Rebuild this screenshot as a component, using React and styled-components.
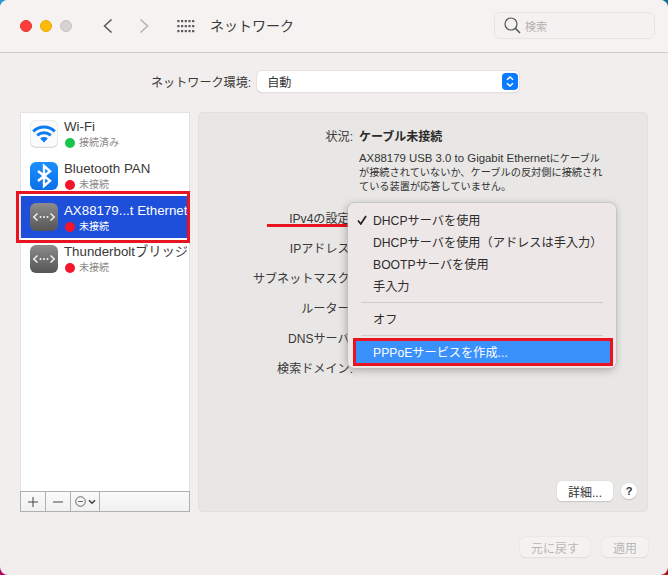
import React from "react";
import styled, { createGlobalStyle } from "styled-components";

const Global = createGlobalStyle`
  html, body { margin: 0; padding: 0; width: 668px; height: 575px; overflow: hidden; }
  body { font-family: "Liberation Sans", "Noto Sans CJK JP", sans-serif; }
  * { box-sizing: border-box; }
`;

const Desktop = styled.div`
  width: 668px;
  height: 575px;
  background:
    radial-gradient(circle at 0 0, #2b95d8 0 12px, transparent 12px),
    radial-gradient(circle at 100% 0, #0f6f94 0 12px, transparent 12px),
    radial-gradient(circle at 0 100%, #b3055f 0 12px, transparent 12px),
    radial-gradient(circle at 100% 100%, #b5121f 0 12px, transparent 12px),
    #f1eeed;
`;

const Window = styled.div`
  width: 668px;
  height: 575px;
  border-radius: 8px;
  background: #f1eeed;
  display: flex;
  flex-direction: column;
  overflow: hidden;
  color: #3a3838;
`;

const TitleBar = styled.header`
  height: 53px;
  flex: none;
  display: flex;
  align-items: center;
  padding: 0 13px 1px 20px;
  background: #f5f2f1;
  border-bottom: 1px solid #cfcbca;
`;

const Lights = styled.div`
  display: flex;
  gap: 8px;
  margin-right: 30px;
`;

const Light = styled.span`
  width: 12px;
  height: 12px;
  border-radius: 50%;
  background: ${(p) => p.$color};
  border: 1px solid ${(p) => p.$edge};
`;

const NavButton = styled.svg`
  width: 12px;
  height: 18px;
  margin-right: ${(p) => p.$gap}px;
  fill: none;
  stroke: ${(p) => p.$color};
  stroke-width: 1.5;
`;

const TitleText = styled.h1`
  margin: 0 0 0 15px;
  font-size: 14px;
  line-height: 18px;
  font-weight: 400;
  color: #3c3a3a;
`;

const SearchBox = styled.div`
  margin-left: auto;
  width: 161px;
  height: 27px;
  display: flex;
  align-items: center;
  gap: 4px;
  padding-left: 9px;
  border: 1px solid #e8e4e3;
  border-radius: 6px;
  background: #f4f1f0;
  font-size: 11px;
  line-height: 14px;
  color: #b3b0af;
`;

const SearchLabel = styled.span`
  padding-top: 2px;
`;

const Content = styled.main`
  flex: 1;
  display: flex;
  flex-direction: column;
  padding: 18px 20px 0;
`;

const EnvRow = styled.div`
  height: 21px;
  display: flex;
  align-items: center;
  justify-content: flex-start;
  padding-left: 131px;
  gap: 6px;
  font-size: 12.1px;
`;

const SelectBox = styled.div`
  position: relative;
  width: 262px;
  height: 21px;
  padding-left: 10px;
  display: flex;
  align-items: center;
  background: #fff;
  border-radius: 5px;
  box-shadow: 0 0 0 1px #e4e1e0, 0 1px 1px #b9b6b5;
  color: #333;
`;

const Stepper = styled.span`
  position: absolute;
  right: 1px;
  top: 2px;
  width: 16px;
  height: 17px;
  border-radius: 4px;
  background: #0a7bff;
  display: flex;
  align-items: center;
  justify-content: center;
`;

const Main = styled.div`
  margin-top: 20px;
  height: 400px;
  display: flex;
  gap: 8px;
`;

const Sidebar = styled.aside`
  width: 170px;
  display: flex;
  flex-direction: column;
  background: #fff;
  border: 1px solid #e4e1e0;
  border-bottom: none;
`;

const ServiceList = styled.ul`
  flex: 1;
  list-style: none;
  margin: 0;
  padding: 0 2px 0 0;
`;

const ServiceRow = styled.li`
  height: 41.7px;
  display: flex;
  align-items: center;
  gap: 6px;
  padding-left: 9px;
  background: ${(p) => (p.$selected ? "#1d4fdb" : "transparent")};
  color: ${(p) => (p.$selected ? "#fff" : "#3a3838")};
`;

const Tile = styled.svg`
  width: 28px;
  height: 28px;
  flex: none;
`;

const ServiceInfo = styled.div`
  min-width: 0;
  padding-top: 3px;
  display: flex;
  flex-direction: column;
  white-space: nowrap;
  overflow: hidden;
`;

const ServiceName = styled.span`
  font-size: 13.3px;
  line-height: 16px;
`;

const ServiceStatus = styled.span`
  display: flex;
  align-items: center;
  gap: 4px;
  font-size: 10px;
  line-height: 16px;
  margin-left: 1px;
  color: ${(p) => (p.$selected ? "#fff" : "#8b8988")};
`;

const Dot = styled.span`
  width: 10px;
  height: 10px;
  border-radius: 50%;
  background: ${(p) => p.$color};
`;

const ListBar = styled.div`
  height: 21px;
  margin: 0 -1px;
  display: flex;
  background: linear-gradient(#fafafa, #f1f0f0);
  border: 1px solid #b1b0b0;
`;

const BarButton = styled.button`
  width: ${(p) => p.$w}px;
  padding: 0;
  border: none;
  border-right: 1px solid #b1b0b0;
  background: transparent;
  display: flex;
  align-items: center;
  justify-content: center;
  gap: 2px;
`;

const Panel = styled.section`
  position: relative;
  width: 450px;
  display: flex;
  flex-direction: column;
  padding-top: 16px;
  background: #e8e7e5;
  border: 1px solid #e2e0de;
  border-radius: 5px;
`;

const StatusGrid = styled.div`
  display: grid;
  grid-template-columns: 154px 260px;
  column-gap: 6px;
  font-size: 12px;
  line-height: 16px;
`;

const RightLabel = styled.div`
  text-align: right;
  white-space: nowrap;
  font-size: 12.1px;
`;

const StatusValue = styled.div`
  font-weight: 700;
  color: #2b2a2a;
`;

const Description = styled.p`
  grid-column: 2;
  margin: 6px 0 0;
  font-size: 10.2px;
  line-height: 14px;
  color: #333;
`;

const DescriptionLatin = styled.span`
  font-size: 11.4px;
`;

const Form = styled.div`
  margin-top: 10px;
  display: flex;
  flex-direction: column;
`;

const FormRow = styled(RightLabel)`
  width: 154px;
  height: 30px;
  line-height: 30px;
`;

const PanelActions = styled.div`
  margin-top: auto;
  padding: 0 10px 10px 0;
  display: flex;
  justify-content: flex-end;
  align-items: center;
  gap: 8px;
`;

const PushButton = styled.button`
  height: 20px;
  width: ${(p) => p.$w}px;
  padding: 0;
  border: none;
  border-radius: 5px;
  background: #fff;
  box-shadow: 0 0 0 0.5px #dedcdb, 0 1px 1px #b5b3b2;
  font: 12px "Liberation Sans", "Noto Sans CJK JP", sans-serif;
  color: #333;
`;

const HelpButton = styled.button`
  width: 16px;
  height: 16px;
  padding: 0;
  border: none;
  border-radius: 50%;
  background: #fff;
  box-shadow: 0 0 0 0.5px #dedcdb, 0 1px 1px #b5b3b2;
  font: 700 11px "Liberation Sans", sans-serif;
  color: #333;
`;

const Footer = styled.footer`
  margin-top: 25px;
  display: flex;
  justify-content: flex-end;
  gap: 12px;
`;

const DisabledButton = styled.button`
  height: 20px;
  width: ${(p) => p.$w}px;
  padding: 0;
  border: none;
  border-radius: 5px;
  background: #f4f2f1;
  box-shadow: 0 0 0 0.5px #e6e3e2, 0 1px 1px #dcd9d8;
  font: 12px "Liberation Sans", "Noto Sans CJK JP", sans-serif;
  color: #b9b6b5;
`;

const Underline = styled.div`
  position: absolute;
  left: 68px;
  top: 111px;
  width: 84px;
  height: 2.5px;
  background: #e8141f;
`;

const PopupMenu = styled.div`
  position: absolute;
  left: 149px;
  top: 90px;
  width: 268px;
  padding: 6px 5px 5px;
  background: #ede8e7;
  border-radius: 6px;
  box-shadow: 0 0 0 0.5px #bdbab9, -1px 2px 8px rgba(0, 0, 0, 0.28);
  font-size: 12.2px;
  color: #2e2d2d;
`;

const MenuItem = styled.div`
  position: relative;
  height: 22px;
  line-height: 24px;
  padding-left: 20px;
  border-radius: 1px;
  white-space: nowrap;
  background: ${(p) => (p.$active ? "#3a91fc" : "transparent")};
  color: ${(p) => (p.$active ? "#fff" : "inherit")};
`;

const Check = styled.svg`
  position: absolute;
  left: 4px;
  top: 6px;
  width: 10px;
  height: 10px;
  fill: none;
  stroke: #222;
  stroke-width: 1.7;
`;

const MenuDivider = styled.div`
  height: 1px;
  margin: 5px 8px;
  background: #cfcbca;
`;

const Highlight = styled.div`
  position: absolute;
  left: ${(p) => p.$x}px;
  top: ${(p) => p.$y}px;
  width: ${(p) => p.$w}px;
  height: ${(p) => p.$h}px;
  border: 3px solid #e8141f;
  pointer-events: none;
`;

const Ether = ({ id }) => (
  <Tile viewBox="0 0 28 28">
    <defs>
      <linearGradient id={id} x1="0" y1="0" x2="0" y2="1">
        <stop offset="0" stopColor="#8c8c8c" />
        <stop offset="1" stopColor="#555" />
      </linearGradient>
    </defs>
    <rect width="28" height="28" rx="6" fill={`url(#${id})`} />
    <path d="M7.5 10.5 3.8 14l3.7 3.5M20.5 10.5l3.7 3.5-3.7 3.5" fill="none" stroke="#f2f2f2" strokeWidth="1.5" />
    <circle cx="10.5" cy="14" r="1" fill="#f2f2f2" />
    <circle cx="14" cy="14" r="1" fill="#f2f2f2" />
    <circle cx="17.5" cy="14" r="1" fill="#f2f2f2" />
  </Tile>
);

const WifiIcon = () => (
  <Tile viewBox="0 0 28 28">
    <rect x="0" y="0" width="28" height="28" rx="6" fill="#dcdada" />
    <rect x="0.5" y="0.5" width="27" height="26.2" rx="5.6" fill="#fbfbfb" />
    <g fill="none" stroke="#0b7cf2" strokeWidth="2.9">
      <path d="M3.2 11.4a15.5 15.5 0 0 1 21.6 0" />
      <path d="M7.2 15.4a10 10 0 0 1 13.6 0" />
    </g>
    <path d="M14 22.4 10.2 18.4a5.6 5.6 0 0 1 7.6 0Z" fill="#0b7cf2" />
  </Tile>
);

const BluetoothIcon = () => (
  <Tile viewBox="0 0 28 28">
    <defs>
      <linearGradient id="bt" x1="0" y1="0" x2="0" y2="1">
        <stop offset="0" stopColor="#1a90ff" />
        <stop offset="1" stopColor="#0a6fe8" />
      </linearGradient>
    </defs>
    <rect width="28" height="28" rx="6" fill="url(#bt)" />
    <path d="M8 9 20 18.8 14 24V4l6 5.2L8 19" fill="none" stroke="#fff" strokeWidth="2.4" />
  </Tile>
);

const services = [
  { name: "Wi-Fi", status: "接続済み", color: "#19c64c", icon: <WifiIcon /> },
  { name: "Bluetooth PAN", status: "未接続", color: "#f3152a", icon: <BluetoothIcon /> },
  { name: "AX88179...t Ethernet", status: "未接続", color: "#f3152a", icon: <Ether id="e1" />, selected: true },
  { name: "Thunderboltブリッジ", status: "未接続", color: "#f3152a", icon: <Ether id="e2" /> },
];

const formLabels = ["IPv4の設定:", "IPアドレス:", "サブネットマスク:", "ルーター:", "DNSサーバ:", "検索ドメイン:"];

const SidebarHighlight = () => <Highlight $x={16} $y={191} $w={174} $h={52} />;

export default function App() {
  return (
    <Desktop>
      <Global />
      <Window>
        <TitleBar>
          <Lights>
            <Light $color="#fc3e3c" $edge="#e6332f" />
            <Light $color="#fdba06" $edge="#e8a806" />
            <Light $color="#d5d2d1" $edge="#c6c3c2" />
          </Lights>
          <NavButton viewBox="0 0 12 18" $color="#555" $gap={24}>
            <path d="M9.5 2.5 2.5 9l7 6.5" />
          </NavButton>
          <NavButton viewBox="0 0 12 18" $color="#b5b3b2" $gap={27}>
            <path d="M2.5 2.5 9.5 9l-7 6.5" />
          </NavButton>
          <svg width="18" height="14" viewBox="0 0 18 14">
            {[0, 1, 2].flatMap((r) =>
              [0, 1, 2, 3, 4].map((c) => (
                <rect key={`${r}-${c}`} x={c * 3.7 + 0.3} y={r * 5 + 1} width="2.2" height="2.2" fill="#5a5858" />
              ))
            )}
          </svg>
          <TitleText>ネットワーク</TitleText>
          <SearchBox>
            <svg width="17" height="17" viewBox="0 0 17 17" fill="none" stroke="#555" strokeWidth="1.2">
              <circle cx="7" cy="7" r="6" />
              <path d="M11.4 11.4 16 16" strokeWidth="1.5" />
            </svg>
            <SearchLabel>検索</SearchLabel>
          </SearchBox>
        </TitleBar>
        <Content>
          <EnvRow>
            ネットワーク環境:
            <SelectBox>
              自動
              <Stepper>
                <svg width="10" height="13" viewBox="0 0 10 13" fill="none" stroke="#fff" strokeWidth="1.5">
                  <path d="M2 4.8 5 2l3 2.8M2 8.2 5 11l3-2.8" />
                </svg>
              </Stepper>
            </SelectBox>
          </EnvRow>
          <Main>
            <Sidebar>
              <ServiceList>
                {services.map((s) => (
                  <ServiceRow key={s.name} $selected={s.selected}>
                    {s.icon}
                    <ServiceInfo>
                      <ServiceName>{s.name}</ServiceName>
                      <ServiceStatus $selected={s.selected}>
                        <Dot $color={s.color} />
                        {s.status}
                      </ServiceStatus>
                    </ServiceInfo>
                  </ServiceRow>
                ))}
              </ServiceList>
              <ListBar>
                <BarButton $w={25}>
                  <svg width="12" height="12" viewBox="0 0 12 12" stroke="#444" strokeWidth="1"><path d="M6 1v10M1 6h10" /></svg>
                </BarButton>
                <BarButton $w={25}>
                  <svg width="12" height="12" viewBox="0 0 12 12" stroke="#444" strokeWidth="1"><path d="M1 6h10" /></svg>
                </BarButton>
                <BarButton $w={29}>
                  <svg width="11" height="11" viewBox="0 0 11 11" fill="none" stroke="#555" strokeWidth="0.9">
                    <circle cx="5.5" cy="5.5" r="4.8" />
                    <path d="M3 5.5h5" />
                  </svg>
                  <svg width="8" height="6" viewBox="0 0 8 6" fill="none" stroke="#444" strokeWidth="1.6"><path d="M1 1.2 4 4.2l3-3" /></svg>
                </BarButton>
              </ListBar>
            </Sidebar>
            <Panel>
              <StatusGrid>
                <RightLabel>状況:</RightLabel>
                <StatusValue>ケーブル未接続</StatusValue>
                <Description>
                  <DescriptionLatin>AX88179 USB 3.0 to Gigabit Ethernet</DescriptionLatin>にケーブル<br />
                  が接続されていないか、ケーブルの反対側に接続され<br />
                  ている装置が応答していません。
                </Description>
              </StatusGrid>
              <Form>
                {formLabels.map((l) => (
                  <FormRow key={l}>{l}</FormRow>
                ))}
              </Form>
              <PanelActions>
                <PushButton $w={56}>詳細...</PushButton>
                <HelpButton>?</HelpButton>
              </PanelActions>
              <Underline />
              <PopupMenu>
                <MenuItem>
                  <Check viewBox="0 0 10 10"><path d="M1 5.5 3.8 9 9 1" /></Check>
                  DHCPサーバを使用
                </MenuItem>
                <MenuItem>DHCPサーバを使用（アドレスは手入力）</MenuItem>
                <MenuItem>BOOTPサーバを使用</MenuItem>
                <MenuItem>手入力</MenuItem>
                <MenuDivider />
                <MenuItem>オフ</MenuItem>
                <MenuDivider />
                <MenuItem $active>PPPoEサービスを作成...</MenuItem>
              </PopupMenu>
              <Highlight $x={154} $y={225} $w={260} $h={28} />
            </Panel>
          </Main>
          <Footer>
            <DisabledButton $w={70}>元に戻す</DisabledButton>
            <DisabledButton $w={46}>適用</DisabledButton>
          </Footer>
        </Content>
      </Window>
      <SidebarHighlight />
    </Desktop>
  );
}
